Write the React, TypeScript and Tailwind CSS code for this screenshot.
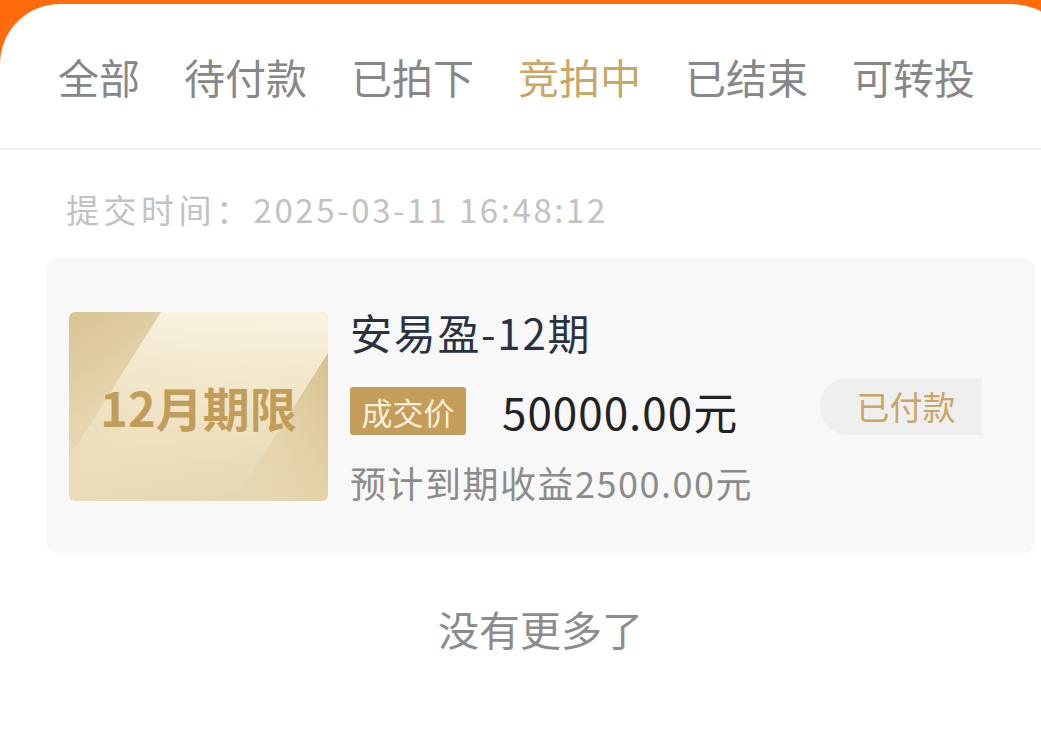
import React from "react";

const tabs = ["全部", "待付款", "已拍下", "竞拍中", "已结束", "可转投"];

function TermImage() {
  return (
    <div className="relative w-[259px] h-[189px] shrink-0 rounded-[6px] overflow-hidden">
      <svg className="absolute inset-0" width="259" height="189" viewBox="0 0 259 189">
        <defs>
          <linearGradient id="base" x1="0" y1="0" x2="1" y2="1">
            <stop offset="0" stopColor="#d8c394" />
            <stop offset="0.45" stopColor="#ebdcb8" />
            <stop offset="1" stopColor="#e6d5ae" />
          </linearGradient>
          <linearGradient id="band" x1="0" y1="0" x2="0" y2="1">
            <stop offset="0" stopColor="#f9f3e0" stopOpacity="1" />
            <stop offset="0.55" stopColor="#f3ead0" stopOpacity="0.55" />
            <stop offset="1" stopColor="#efe3c4" stopOpacity="0" />
          </linearGradient>
          <linearGradient id="edge" x1="1" y1="0" x2="0" y2="1">
            <stop offset="0" stopColor="#d6bf8c" stopOpacity="1" />
            <stop offset="1" stopColor="#e9dab6" stopOpacity="0" />
          </linearGradient>
        </defs>
        <rect x="0" y="0" width="259" height="189" fill="url(#base)" />
        <polygon points="92,0 259,0 259,41 165,189 -27,189" fill="url(#band)" />
        <polygon points="259,41 259,189 165,189" fill="url(#edge)" />
      </svg>
      <div className="relative flex h-full w-full items-center justify-center">
        <span className="text-[47px] leading-none font-bold text-[#c29c59]">
          12月期限
        </span>
      </div>
    </div>
  );
}

export default function App() {
  return (
    <div
      className="w-[1041px] h-[747px] overflow-hidden bg-[#ff6a0c]"
      style={{ fontFamily: '"Noto Sans CJK SC", "Noto Sans", sans-serif' }}
    >
      <div className="mt-[4px] w-[1072px] h-[800px] rounded-tl-[60px] rounded-tr-[60px] bg-white">
        {/* Tabs */}
        <div className="flex h-[146px] items-center gap-[44px] pl-[58px] border-b-2 border-[#eeeeee]">
          {tabs.map((t) => (
            <span
              key={t}
              className={
                "text-[41px] leading-none " +
                (t === "竞拍中" ? "text-[#c9a766]" : "text-[#878787]")
              }
            >
              {t}
            </span>
          ))}
        </div>

        {/* Submit time */}
        <div className="flex h-[108px] items-center pt-[10px] pl-[66px] text-[33px] leading-none text-[#c2c2c2]">
          <span className="tracking-[4.5px]">提交时间：</span>
          <span className="tracking-[2.6px]">2025-03-11 16:48:12</span>
        </div>

        {/* Card */}
        <div className="ml-[46px] w-[989px] h-[295px] rounded-[12px] bg-[#f8f8f8] flex items-start pt-[54px] pl-[23px]">
          <TermImage />
          <div className="ml-[22px] flex flex-col">
            <div className="flex h-[40px] items-center text-[42px] leading-none tracking-[1.7px] text-[#29323e]">
              安易盈-12期
            </div>
            <div className="mt-[35px] flex h-[48px] items-center">
              <span className="flex h-[48px] w-[116px] items-center justify-center rounded-[3px] bg-[#c49d5a] text-[31px] leading-none text-[#fbf0da]">
                成交价
              </span>
              <span className="ml-[36px] text-[44px] leading-none tracking-[1px] text-[#222222]">
                50000.00元
              </span>
            </div>
            <div className="mt-[27px] flex h-[40px] items-center text-[36px] leading-none tracking-[1.5px] text-[#8b8b8b]">
              预计到期收益2500.00元
            </div>
          </div>
          <div className="ml-auto mr-[53px] mt-[66px] flex h-[57px] w-[162px] items-center justify-center rounded-l-full bg-[#efefef] pl-[10px]">
            <span className="text-[33px] leading-none text-[#c9a665]">已付款</span>
          </div>
        </div>

        {/* Footer */}
        <div className="ml-[46px] w-[989px] flex h-[150px] items-center justify-center text-[41px] leading-none text-[#8c8c8c]">
          没有更多了
        </div>
      </div>
    </div>
  );
}
